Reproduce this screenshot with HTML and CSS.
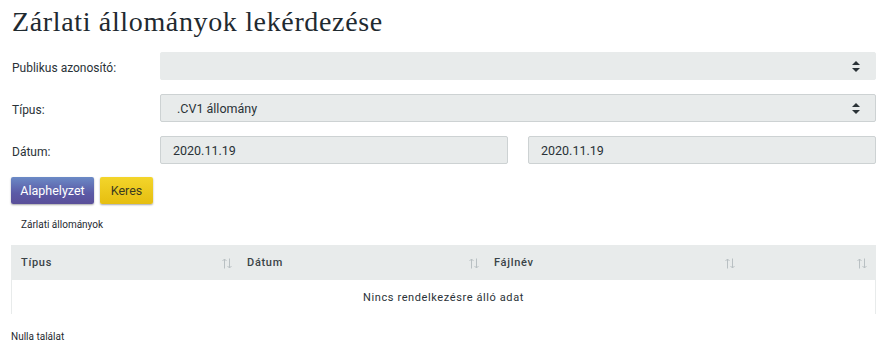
FILE: index.html
```html
<!DOCTYPE html>
<html>

<head>
    <meta charset="utf-8">
    <link rel="stylesheet" href="styles.css">
</head>

<body>
    <div class="page">
        <h1>Zárlati állományok lekérdezése</h1>

        <div class="form">
            <div class="form-row">
                <label class="form-label">Publikus azonosító:</label>
                <div class="field select plain">
                    <span class="field-value"></span>
                    <svg class="select-arrow" width="8" height="11" viewBox="0 0 8 11">
                        <path d="M4 0 L8 4 L0 4 Z M0 7 L8 7 L4 11 Z" fill="#2a3237" />
                    </svg>
                </div>
            </div>
            <div class="form-row">
                <label class="form-label">Típus:</label>
                <div class="field select">
                    <span class="field-value indent">.CV1 állomány</span>
                    <svg class="select-arrow" width="8" height="11" viewBox="0 0 8 11">
                        <path d="M4 0 L8 4 L0 4 Z M0 7 L8 7 L4 11 Z" fill="#2a3237" />
                    </svg>
                </div>
            </div>
            <div class="form-row">
                <label class="form-label">Dátum:</label>
                <div class="date-pair">
                    <div class="field">
                        <span class="field-value">2020.11.19</span>
                    </div>
                    <div class="field">
                        <span class="field-value">2020.11.19</span>
                    </div>
                </div>
            </div>
        </div>

        <div class="buttons">
            <button class="btn btn-reset">Alaphelyzet</button>
            <button class="btn btn-search">Keres</button>
        </div>

        <div class="table-caption">Zárlati állományok</div>

        <div class="table">
            <div class="table-head">
                <div class="th col-type">Típus
                    <svg class="sort" width="10" height="11" viewBox="0 0 10 11">
                        <path d="M2.5 10.5 V1 M0.5 3 L2.5 1 L4.5 3 M7.5 0.5 V10 M5.5 8 L7.5 10 L9.5 8" />
                    </svg>
                </div>
                <div class="th col-date">Dátum
                    <svg class="sort" width="10" height="11" viewBox="0 0 10 11">
                        <path d="M2.5 10.5 V1 M0.5 3 L2.5 1 L4.5 3 M7.5 0.5 V10 M5.5 8 L7.5 10 L9.5 8" />
                    </svg>
                </div>
                <div class="th col-file">Fájlnév
                    <svg class="sort" width="10" height="11" viewBox="0 0 10 11">
                        <path d="M2.5 10.5 V1 M0.5 3 L2.5 1 L4.5 3 M7.5 0.5 V10 M5.5 8 L7.5 10 L9.5 8" />
                    </svg>
                </div>
                <div class="th col-rest">
                    <svg class="sort" width="10" height="11" viewBox="0 0 10 11">
                        <path d="M2.5 10.5 V1 M0.5 3 L2.5 1 L4.5 3 M7.5 0.5 V10 M5.5 8 L7.5 10 L9.5 8" />
                    </svg>
                </div>
            </div>
            <div class="table-empty">Nincs rendelkezésre álló adat</div>
        </div>

        <div class="result-count">Nulla találat</div>
    </div>
</body>

</html>
```

FILE: styles.css
```css
* {
    margin: 0;
    padding: 0;
    box-sizing: border-box;
}

body {
    font-family: Roboto, 'Open Sans', sans-serif;
    font-size: 12px;
    color: #2a3237;
    background: #ffffff;
}

.page {
    padding: 0 11px;
    width: 887px;
}

h1 {
    font-family: 'Liberation Serif', serif;
    font-size: 28px;
    font-weight: 400;
    line-height: 34px;
    padding: 5px 0 0 1px;
    color: #1f2a30;
    letter-spacing: 0.65px;
}

.form {
    margin-top: 13px;
    display: flex;
    flex-direction: column;
    gap: 14px;
}

.form-row {
    display: flex;
    align-items: center;
    height: 28px;
}

.form-label {
    width: 149px;
    padding: 3px 0 0 1px;
    flex-shrink: 0;
    font-size: 12px;
    color: #2a3237;
}

.field {
    flex: 1;
    height: 28px;
    background: #e8ebeb;
    border: 1px solid #cdd2d3;
    border-radius: 2px;
    display: flex;
    align-items: center;
    justify-content: space-between;
    padding: 1px 12px 0 12px;
}

.field.plain {
    border-color: #e8ebeb;
}

.field-value {
    font-size: 12.5px;
    color: #2a3237;
}

.field-value.indent {
    padding-left: 4px;
}

.select-arrow {
    margin-right: 3px;
}

.date-pair {
    flex: 1;
    display: flex;
    gap: 20px;
}

.buttons {
    margin-top: 13px;
    display: flex;
    gap: 6px;
}

.btn {
    height: 27px;
    border: none;
    border-radius: 2px;
    font-family: Roboto, 'Open Sans', sans-serif;
    font-size: 12.5px;
    padding: 0 6px;
    box-shadow: 0 1px 2px rgba(0, 0, 0, 0.35);
    cursor: pointer;
}

.btn-reset {
    width: 83px;
    background: linear-gradient(180deg, #6b8ac6 0%, #5b5aa6 60%, #5a4f99 100%);
    color: #ffffff;
}

.btn-search {
    width: 53px;
    background: linear-gradient(180deg, #f3d52b 0%, #e6be10 100%);
    color: #3b3a20;
}

.table-caption {
    margin-top: 15px;
    padding-left: 10px;
    font-size: 10px;
    line-height: 12px;
    color: #1f2a30;
}

.table {
    margin-top: 14px;
    width: 865px;
}

.table-head {
    display: flex;
    height: 35px;
    background: #e8ebeb;
}

.th {
    display: flex;
    align-items: center;
    justify-content: space-between;
    padding: 0 5px 0 10px;
    font-size: 11px;
    font-weight: 500;
    letter-spacing: 0.7px;
    color: #3a4347;
}

.col-type {
    width: 226px;
}

.col-date {
    width: 247px;
}

.col-file {
    width: 256px;
}

.col-rest {
    flex: 1;
    justify-content: flex-end;
    padding-right: 9px;
}

.sort {
    fill: none;
    stroke: #b9c0c3;
    stroke-width: 1;
    margin-top: 2px;
}

.table-empty {
    height: 34px;
    display: flex;
    align-items: center;
    justify-content: center;
    border-left: 1px solid #e8ebeb;
    border-right: 1px solid #e8ebeb;
    font-size: 11px;
    letter-spacing: 0.6px;
    color: #2a3237;
}

.result-count {
    margin-top: 17px;
    font-size: 10px;
    color: #1f2a30;
}
```
